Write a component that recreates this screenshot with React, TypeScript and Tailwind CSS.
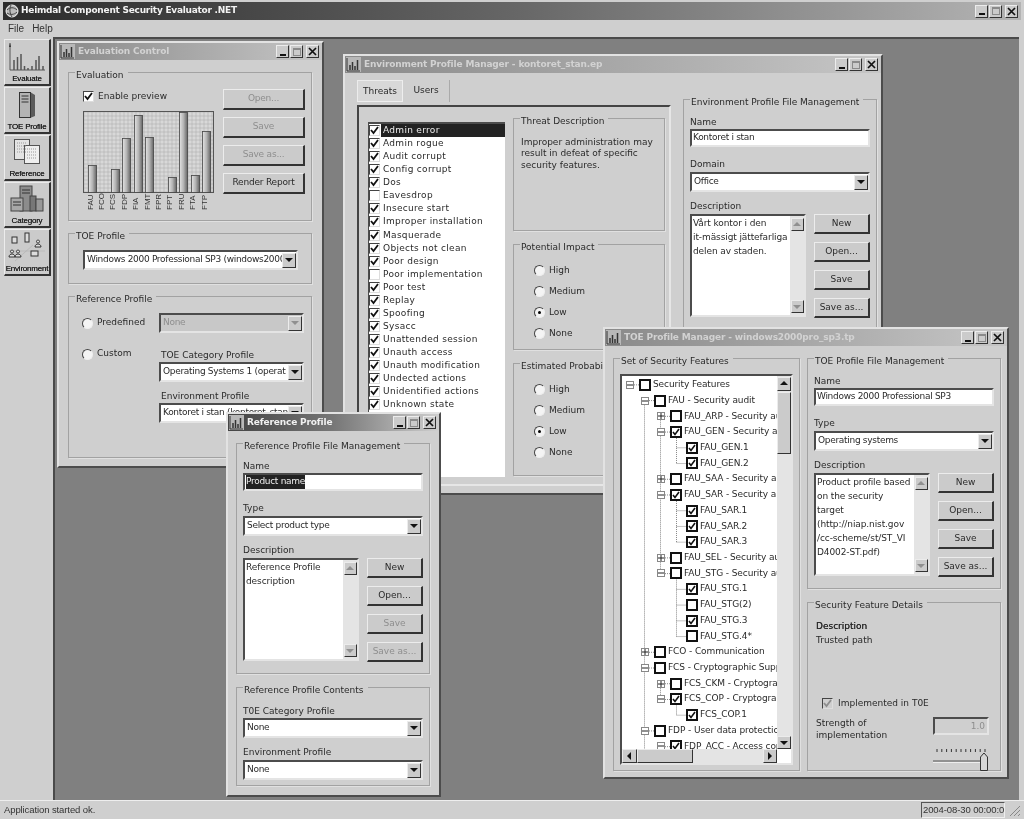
import React from 'react';

const raised = 'border border-t-[#ececec] border-l-[#ececec] border-r-[#333] border-b-[#333] bg-[#cbcbcb]';
const sunken = 'border-2 border-t-[#4c4c4c] border-l-[#4c4c4c] border-r-[#e4e4e4] border-b-[#e4e4e4]';

function ChartIcon({ className }: { className?: string }) {
  return (
    <svg width="15" height="15" viewBox="0 0 15 15" className={className}>
      <rect width="15" height="15" fill="#b8b8b8" />
      <path d="M1 1V14H14" stroke="#333" fill="none" />
      <path d="M4 13V8M6.500 13V5M9 13V9M11.500 13V3" stroke="#333" strokeWidth="1.500" />
    </svg>
  );
}

function WinButtons() {
  const cls = `${raised} w-[13px] h-[13px] flex items-center justify-center`;
  return (
    <div className="flex items-center gap-[1px]">
      <span className={cls}>
        <span className="w-[6px] h-[2px] bg-[#111] mt-[6px]" />
      </span>
      <span className={`${cls} mr-[2px]`}>
        <span className="w-[8px] h-[8px] border border-[#8a8a8a] border-t-2" />
      </span>
      <span className={cls}>
        <svg width="9" height="9" viewBox="0 0 9 9">
          <path d="M1 1L8 8M8 1L1 8" stroke="#111" strokeWidth="1.700" />
        </svg>
      </span>
    </div>
  );
}

function Win({ className, title, active, children }: { className: string; title: string; active?: boolean; children: React.ReactNode }) {
  return (
    <div className={`absolute flex flex-col bg-[#cfcfcf] border-2 border-t-[#e2e2e2] border-l-[#e2e2e2] border-r-[#4c4c4c] border-b-[#4c4c4c] ${className}`}>
      <div
        className={`h-[17px] shrink-0 flex items-center pr-[3px] ${
          active ? 'bg-gradient-to-r from-[#444] via-[#777] to-[#cfcfcf]' : 'bg-gradient-to-r from-[#8a8a8a] to-[#c6c6c6]'
        }`}
      >
        <ChartIcon className="ml-[1px] mr-[3px]" />
        <span className={`font-bold text-[9px] tracking-[-0.15px] pt-[1px] whitespace-nowrap flex-1 overflow-hidden ${active ? 'text-[#f0f0f0]' : 'text-[#d2d2d2]'}`}>{title}</span>
        <WinButtons />
      </div>
      {children}
    </div>
  );
}

function Group({ title, className, children }: { title: string; className: string; children?: React.ReactNode }) {
  return (
    <div className={`relative shrink-0 border border-[#a2a2a2] shadow-[1px_1px_0_#e0e0e0] ${className}`}>
      <span className="absolute left-[6px] top-[-4px] pl-[1px] pr-[4px] leading-[12px] whitespace-nowrap">
        <span className="absolute left-0 right-0 top-0 h-[4px] bg-[#cfcfcf]" />
        <span className="relative">{title}</span>
      </span>
      {children}
    </div>
  );
}

function Btn({ label, disabled, className }: { label: string; disabled?: boolean; className?: string }) {
  return (
    <div className={`${raised} flex items-center justify-center whitespace-nowrap border-r-2 border-b-2 ${disabled ? 'text-[#8e8e8e]' : ''} ${className ?? ''}`}>{label}</div>
  );
}

function Arrow({ dir, disabled }: { dir: 'up' | 'down' | 'left' | 'right'; disabled?: boolean }) {
  const d = { up: 'M1 6H9L5 2Z', down: 'M1 3H9L5 7Z', left: 'M6 1V9L2 5Z', right: 'M3 1V9L7 5Z' }[dir];
  return (
    <svg width="10" height="10" viewBox="0 0 10 10">
      <path d={d} fill={disabled ? '#909090' : '#111'} />
    </svg>
  );
}

function Combo({ text, disabled, className }: { text: string; disabled?: boolean; className: string }) {
  return (
    <div className={`${sunken} h-[20px] flex items-center overflow-hidden ${disabled ? 'bg-[#c8c8c8] text-[#8e8e8e]' : 'bg-white'} ${className}`}>
      <span className="flex-1 pl-[2px] whitespace-nowrap overflow-hidden tracking-[-0.3px]">{text}</span>
      <span className={`${raised} w-[14px] h-[15px] shrink-0 flex items-center justify-center`}>
        <Arrow dir="down" disabled={disabled} />
      </span>
    </div>
  );
}

function Check({ checked, disabled }: { checked?: boolean; disabled?: boolean }) {
  return (
    <span className={`w-[11px] h-[11px] shrink-0 flex items-center justify-center border border-t-[#444] border-l-[#444] border-r-[#ddd] border-b-[#ddd] ${disabled ? 'bg-[#cfcfcf]' : 'bg-white'}`}>
      {checked && (
        <svg width="9" height="9" viewBox="0 0 9 9">
          <path d="M1 4L3.500 7L8 1" stroke={disabled ? '#8e8e8e' : '#111'} strokeWidth="1.800" fill="none" />
        </svg>
      )}
    </span>
  );
}

function Radio({ checked }: { checked?: boolean }) {
  return (
    <span className="w-[11px] h-[11px] shrink-0 rounded-full bg-[#f4f4f4] border border-t-[#444] border-l-[#444] border-r-[#eee] border-b-[#eee] flex items-center justify-center">
      {checked && <span className="w-[3px] h-[3px] rounded-full bg-black" />}
    </span>
  );
}

function Scroll({ upDisabled }: { upDisabled?: boolean }) {
  return (
    <div className="w-[14px] shrink-0 bg-[#e4e4e4] flex flex-col justify-between items-center py-[2px]">
      <span className={`${raised} w-[13px] h-[13px] flex items-center justify-center`}>
        <Arrow dir="up" disabled={upDisabled} />
      </span>
      <span className={`${raised} w-[13px] h-[13px] flex items-center justify-center`}>
        <Arrow dir="down" disabled={upDisabled} />
      </span>
    </div>
  );
}

function TextBox({ lines }: { lines: string[] }) {
  return (
    <div className={`${sunken} w-[116px] h-[103px] bg-white flex`}>
      <div className="flex-1 pl-[1px] leading-[14px] whitespace-nowrap overflow-hidden tracking-[-0.1px]">
        {lines.map((l) => (
          <div key={l}>{l}</div>
        ))}
      </div>
      <Scroll upDisabled />
    </div>
  );
}

function FileMgmt({
  title,
  name,
  typeLabel,
  typeVal,
  lines,
  off,
  selected,
}: {
  title: string;
  name: string;
  typeLabel: string;
  typeVal: string;
  lines: string[];
  off?: boolean;
  selected?: boolean;
}) {
  return (
    <Group title={title} className="w-[194px] h-[231px] pl-[6px] pt-[16px]">
      <div className="leading-[12px]">Name</div>
      <div className={`${sunken} mt-[1px] w-[180px] h-[18px] bg-white flex items-center pl-[1px] whitespace-nowrap tracking-[-0.3px]`}>
        {selected ? <span className="bg-[#222] text-[#eee]">{name}</span> : name}
      </div>
      <div className="leading-[12px] mt-[11px]">{typeLabel}</div>
      <Combo text={typeVal} className="mt-[2px] w-[180px]" />
      <div className="leading-[12px] mt-[8px]">Description</div>
      <div className="flex mt-[2px]">
        <TextBox lines={lines} />
        <div className="ml-[8px] flex flex-col gap-[8px]">
          <Btn label="New" className="w-[56px] h-[20px]" />
          <Btn label="Open..." className="w-[56px] h-[20px]" />
          <Btn label="Save" disabled={off} className="w-[56px] h-[20px]" />
          <Btn label="Save as..." disabled={off} className="w-[56px] h-[20px]" />
        </div>
      </div>
    </Group>
  );
}

const chartBars = [
  [5, 54],
  [28, 58],
  [39, 27],
  [51, 4],
  [62, 26],
  [85, 66],
  [96, 1],
  [108, 64],
  [119, 20],
];
const chartNames = ['FAU', 'FCO', 'FCS', 'FDP', 'FIA', 'FMT', 'FPR', 'FPT', 'FRU', 'FTA', 'FTP'];

function Chart() {
  const grid: number[] = [];
  for (let i = 0; i < 34; i++) grid.push(i * 4);
  return (
    <svg width="131" height="101" viewBox="0 0 131 101" className="block mt-[7px]">
      <rect x="0.500" y="0.500" width="130" height="81" fill="#d8d8d8" stroke="#555" />
      {grid.map((v) => (
        <path key={v} d={`M${v + 1} 1V81M1 ${v + 1}H130`} stroke="#a8a8a8" strokeWidth="0.500" clipPath="url(#c)" />
      ))}
      <clipPath id="c">
        <rect x="1" y="1" width="129" height="80" />
      </clipPath>
      <linearGradient id="bar">
        <stop offset="0" stopColor="#e4e4e4" />
        <stop offset="0.500" stopColor="#b4b4b4" />
        <stop offset="1" stopColor="#666" />
      </linearGradient>
      {chartBars.map(([x, y]) => (
        <rect key={x} x={x + 0.500} y={y + 0.500} width="8" height={81 - y} fill="url(#bar)" stroke="#444" strokeWidth="0.800" />
      ))}
      {chartNames.map((n, i) => (
        <text key={n} transform={`translate(${9.500 + i * 11.400} 99) rotate(-90)`} fontSize="8" fontFamily="Liberation Sans" fill="#333">
          {n}
        </text>
      ))}
    </svg>
  );
}

const threats: [string, boolean][] = [
  ['Admin error', true],
  ['Admin rogue', true],
  ['Audit corrupt', true],
  ['Config corrupt', true],
  ['Dos', true],
  ['Eavesdrop', false],
  ['Insecure start', true],
  ['Improper installation', true],
  ['Masquerade', true],
  ['Objects not clean', true],
  ['Poor design', true],
  ['Poor implementation', false],
  ['Poor test', true],
  ['Replay', true],
  ['Spoofing', true],
  ['Sysacc', true],
  ['Unattended session', true],
  ['Unauth access', true],
  ['Unauth modification', true],
  ['Undected actions', true],
  ['Unidentified actions', true],
  ['Unknown state', true],
];

type TreeRow = [number, '+' | '-' | '', boolean, string];
const tree: TreeRow[] = [
  [0, '-', false, 'Security Features'],
  [1, '-', false, 'FAU - Security audit'],
  [2, '+', false, 'FAU_ARP - Security audit'],
  [2, '-', true, 'FAU_GEN - Security audit'],
  [3, '', true, 'FAU_GEN.1'],
  [3, '', true, 'FAU_GEN.2'],
  [2, '+', false, 'FAU_SAA - Security audit'],
  [2, '-', true, 'FAU_SAR - Security audit'],
  [3, '', true, 'FAU_SAR.1'],
  [3, '', true, 'FAU_SAR.2'],
  [3, '', true, 'FAU_SAR.3'],
  [2, '+', false, 'FAU_SEL - Security audit'],
  [2, '-', false, 'FAU_STG - Security audit'],
  [3, '', true, 'FAU_STG.1'],
  [3, '', false, 'FAU_STG(2)'],
  [3, '', true, 'FAU_STG.3'],
  [3, '', false, 'FAU_STG.4*'],
  [1, '+', false, 'FCO - Communication'],
  [1, '-', false, 'FCS - Cryptographic Support'],
  [2, '+', false, 'FCS_CKM - Cryptographic'],
  [2, '-', true, 'FCS_COP - Cryptographic'],
  [3, '', true, 'FCS_COP.1'],
  [1, '-', false, 'FDP - User data protection'],
  [2, '-', true, 'FDP_ACC - Access control'],
];

const indent = ['pl-[4px]', 'pl-[19px]', 'pl-[35px]', 'pl-[64px]'];
const expX = [4, 19, 35];

// the dotted guide lines of the tree
function treeLines() {
  const c = (i: number) => 8.870 + i * 15.73;
  let d = `M22.500 ${c(1)}V374`;
  const spans2 = [[2, 12], [19, 20], [23, 24]];
  const spans3 = [[3, 5], [7, 10], [12, 16], [20, 21]];
  spans2.forEach(([a, b]) => (d += `M38.500 ${c(a)}V${c(b)}`));
  spans3.forEach(([a, b]) => (d += `M54.500 ${c(a)}V${c(b)}`));
  tree.forEach(([lvl, exp], i) => {
    if (exp) d += `M${expX[lvl] + 8} ${c(i)}H${expX[lvl] + 13}`;
    if (lvl === 3) d += `M54.500 ${c(i)}H64`;
  });
  return d;
}

function Tree() {
  return (
    <div className="relative flex-1 overflow-hidden pt-[1px]">
      <svg className="absolute left-0 top-0" width="160" height="375" viewBox="0 0 160 375">
        <path d={treeLines()} stroke="#888" strokeDasharray="1 1" fill="none" />
      </svg>
      {tree.map(([lvl, exp, on, label]) => (
        <div key={label} className={`relative h-[15.730px] flex items-center whitespace-nowrap tracking-[-0.1px] ${indent[lvl]}`}>
          {exp && (
            <span className="w-[8px] h-[8px] mr-[5px] border border-[#888] bg-white flex items-center justify-center">
              <svg width="6" height="6" viewBox="0 0 6 6">
                <path d={exp === '+' ? 'M0 3H6M3 0V6' : 'M0 3H6'} stroke="#222" />
              </svg>
            </span>
          )}
          <span className="w-[12px] h-[12px] shrink-0 border-2 border-[#111] bg-white flex items-center justify-center">
            {on && (
              <svg width="8" height="8" viewBox="0 0 8 8">
                <path d="M1 4L3 6.500L7 1" stroke="#111" strokeWidth="1.600" fill="none" />
              </svg>
            )}
          </span>
          <span className="ml-[2px]">{label}</span>
        </div>
      ))}
    </div>
  );
}

function SideBtn({ label, icon, className }: { label: string; icon: React.ReactNode; className: string }) {
  return (
    <div className={`${raised} border-r-2 border-b-2 w-[47px] flex flex-col items-center justify-end ${className}`}>
      {icon}
      <span className="font-['Liberation_Sans',sans-serif] text-[8px] tracking-[-0.2px] leading-[11px] text-[#222] [text-shadow:0_0_0.6px_#222] whitespace-nowrap">{label}</span>
    </div>
  );
}

const evalIcon = (
  <svg width="38" height="30" viewBox="0 0 38 30" className="mb-[1px]">
    <path d="M2 1V28H37" stroke="#555" fill="none" />
    <path d="M2 1L1 5H3Z" fill="#333" />
    <g stroke="#c8c8c8" strokeWidth="0.500">
      <path d="M6 4V27M10 4V27M14 4V27M18 4V27M22 4V27M26 4V27M30 4V27M34 4V27M3 8H36M3 13H36M3 18H36M3 23H36" />
    </g>
    <path d="M6 28V18M9.500 28V15M13 28V12M16.500 28V24M20 28V26M24 28V24M28 28V18M31 28V14M35 28V24" stroke="#555" strokeWidth="1.500" />
  </svg>
);
const serverIcon = (
  <svg width="20" height="28" viewBox="0 0 20 28" className="mb-[2px]">
    <path d="M3 1H13L18 4V25L13 27H3Z" fill="#5b5b5b" />
    <rect x="2.500" y="1.500" width="11" height="25" fill="#b4b4b4" stroke="#333" />
    <path d="M4.500 5H11.500M4.500 8H11.500M4.500 11H11.500" stroke="#333" />
  </svg>
);
const docsIcon = (
  <svg width="28" height="28" viewBox="0 0 28 28" className="mb-[2px]">
    <rect x="1.500" y="1.500" width="15" height="20" fill="#e4e4e4" stroke="#555" />
    <rect x="11.500" y="7.500" width="15" height="18" fill="#efefef" stroke="#555" />
    <path d="M4 5H14M4 8H14M4 11H14M4 14H14M14 11H24M14 14H24M14 17H24M14 20H24" stroke="#999" strokeDasharray="1 1" />
  </svg>
);
const catIcon = (
  <svg width="34" height="28" viewBox="0 0 34 28" className="mb-[2px]">
    <rect x="10" y="1" width="12" height="25" fill="#8c8c8c" stroke="#444" />
    <rect x="1" y="13" width="12" height="13" fill="#a8a8a8" stroke="#444" />
    <rect x="20" y="11" width="6" height="15" fill="#777" stroke="#444" />
    <rect x="26" y="14" width="7" height="12" fill="#999" stroke="#444" />
    <path d="M12 5H20M12 8H20M3 17H11M3 20H11" stroke="#333" />
  </svg>
);
const envIcon = (
  <svg width="40" height="32" viewBox="0 0 40 32">
    <path d="M2 20H38M8 30L26 14" stroke="#aaa" strokeWidth="0.500" />
    <rect x="5" y="6" width="5" height="6" fill="#ddd" stroke="#333" />
    <rect x="18" y="2" width="4" height="9" fill="#ddd" stroke="#333" />
    <path d="M31 9a1.500 1.500 0 1 0 .01 0M28 16c0-4 6-4 6 0Z" fill="#ddd" stroke="#333" />
    <path d="M5 19a1.500 1.500 0 1 0 .01 0M2 26c0-4 6-4 6 0ZM11 19a1.500 1.500 0 1 0 .01 0M8 26c0-4 6-4 6 0Z" fill="#ddd" stroke="#333" />
    <rect x="24" y="20" width="7" height="5" fill="#ddd" stroke="#333" />
  </svg>
);

function LevelRadios() {
  return (
    <>
      {['High', 'Medium', 'Low', 'None'].map((v) => (
        <div key={v} className="flex items-center gap-[4px] h-[15px]">
          <Radio checked={v === 'Low'} />
          {v}
        </div>
      ))}
    </>
  );
}

export default function App() {
  return (
    <div className="relative w-[1024px] h-[819px] overflow-hidden bg-[#cfcfcf] font-['DejaVu_Sans',sans-serif] text-[9px] text-[#2a2a2a] flex flex-col blur-[0.35px]">
      <div className="h-[18px] mt-[2px] mx-[3px] shrink-0 bg-gradient-to-r from-[#2c2c2c] via-[#666] to-[#b4b4b4] flex items-center pr-[3px]">
        <svg width="14" height="14" viewBox="0 0 14 14" className="mx-[2px]">
          <circle cx="7" cy="7" r="6" fill="#bbb" stroke="#eee" />
          <path d="M2 6C5 3 9 3 12 6M2 9C5 11 9 11 12 8M6 1C4 5 5 10 7 13" stroke="#444" fill="none" />
        </svg>
        <span className="font-bold text-[9px] tracking-[-0.25px] text-[#f2f2f2] flex-1 whitespace-nowrap">Heimdal Component Security Evaluator .NET</span>
        <WinButtons />
      </div>
      <div className="h-[17px] shrink-0 flex items-center gap-[8px] pl-[8px] font-['Liberation_Sans',sans-serif] text-[10px] text-[#333]">
        <span>File</span>
        <span>Help</span>
      </div>

      <div className="flex flex-1 min-h-0">
        <div className="w-[53px] shrink-0 pl-[4px] pt-[2px] flex flex-col gap-[1px]">
          <SideBtn label="Evaluate" icon={evalIcon} className="h-[47px]" />
          <SideBtn label="TOE Profile" icon={serverIcon} className="h-[47px]" />
          <SideBtn label="Reference" icon={docsIcon} className="h-[46px]" />
          <SideBtn label="Category" icon={catIcon} className="h-[46px]" />
          <SideBtn label="Environment" icon={envIcon} className="h-[47px]" />
        </div>

        <div className="relative w-[966px] bg-[#808080] border-t-2 border-l-2 border-t-[#4a4a4a] border-l-[#4a4a4a]">
          {/* Evaluation Control */}
          <Win title="Evaluation Control" className="left-[2px] top-[2px] w-[267px] h-[427px]">
            <div className="pl-[9px] pt-[12px] flex flex-col">
              <Group title="Evaluation" className="w-[244px] h-[149px] flex pl-[14px] pt-[16px]">
                <div className="w-[131px]">
                  <div className="flex items-center gap-[4px] h-[15px]">
                    <Check checked />
                    <span>Enable preview</span>
                  </div>
                  <Chart />
                </div>
                <div className="ml-[9px] flex flex-col gap-[7px] tracking-[-0.2px]">
                  <Btn label="Open..." disabled className="w-[82px] h-[21px]" />
                  <Btn label="Save" disabled className="w-[82px] h-[21px]" />
                  <Btn label="Save as..." disabled className="w-[82px] h-[21px]" />
                  <Btn label="Render Report" className="w-[82px] h-[21px]" />
                </div>
              </Group>
              <Group title="TOE Profile" className="w-[244px] h-[51px] mt-[12px] pl-[14px] pt-[16px]">
                <Combo text="Windows 2000 Professional SP3 (windows2000" className="w-[215px]" />
              </Group>
              <Group title="Reference Profile" className="w-[244px] h-[162px] mt-[12px] pl-[13px] pt-[16px]">
                <div className="flex items-center">
                  <Radio />
                  <span className="ml-[4px] w-[62px]">Predefined</span>
                  <Combo text="None" disabled className="w-[145px]" />
                </div>
                <div className="flex mt-[15px]">
                  <div className="flex items-center h-[12px]">
                    <Radio />
                    <span className="ml-[4px] w-[62px]">Custom</span>
                  </div>
                  <div className="mt-[1px]">
                    <div className="leading-[12px] ml-[2px]">TOE Category Profile</div>
                    <Combo text="Operating Systems 1 (operat" className="w-[145px] mt-[1px]" />
                    <div className="leading-[12px] mt-[8px] ml-[2px]">Environment Profile</div>
                    <Combo text="Kontoret i stan (kontoret_stan)" className="w-[145px] mt-[1px]" />
                  </div>
                </div>
              </Group>
            </div>
          </Win>

          {/* Environment Profile Manager */}
          <Win title="Environment Profile Manager - kontoret_stan.ep" className="left-[288px] top-[15px] w-[540px] h-[441px]">
            <div className="flex flex-1">
              <div className="ml-[11px] mt-[7px] w-[315px]">
                <div className="flex h-[22px] pl-[1px]">
                  <span className={`${raised} w-[46px] pt-[1px] flex items-center justify-center bg-[#d8d8d8] border-r-[#eee] border-b-[#eee]`}>Threats</span>
                  <span className="w-[47px] flex items-center justify-center border-r border-r-[#aaa]">Users</span>
                </div>
                <div className="mt-[3px] ml-[1px] w-[314px] h-[381px] border-2 border-t-[#444] border-l-[#444] border-r-[#e6e6e6] border-b-[#e6e6e6] flex pl-[9px] pt-[15px]">
                  <div className="w-[137px] h-[355px] bg-white border-l border-t-2 border-t-[#4c4c4c] border-l-[#4c4c4c] overflow-hidden">
                    {threats.map(([t, on], i) => (
                      <div key={t} className="h-[13.070px] flex items-center whitespace-nowrap tracking-[0.3px]">
                        <Check checked={on} />
                        <span className={`ml-[1px] pl-[2px] flex-1 leading-[13px] ${i === 0 ? 'bg-[#222] text-[#eee]' : ''}`}>{t}</span>
                      </div>
                    ))}
                  </div>
                  <div className="ml-[8px] -mt-[4px] flex flex-col">
                    <Group title="Threat Description" className="w-[152px] h-[113px] pl-[7px] pt-[18px] leading-[11.300px]">
                      Improper administration may
                      <br />
                      result in defeat of specific
                      <br />
                      security features.
                    </Group>
                    <Group title="Potential Impact" className="w-[152px] h-[106px] mt-[13px] pl-[20px] pt-[18px] flex flex-col gap-[6px]">
                      <LevelRadios />
                    </Group>
                    <Group title="Estimated Probability" className="w-[152px] h-[113px] mt-[13px] pl-[20px] pt-[18px] flex flex-col gap-[6px]">
                      <LevelRadios />
                    </Group>
                  </div>
                </div>
              </div>
              <div className="ml-[12px] mt-[26px]">
                <FileMgmt
                  title="Environment Profile File Management"
                  name="Kontoret i stan"
                  typeLabel="Domain"
                  typeVal="Office"
                  lines={['Vårt kontor i den', 'it-mässigt jättefarliga', 'delen av staden.']}
                />
              </div>
            </div>
          </Win>

          {/* TOE Profile Manager */}
          <Win title="TOE Profile Manager - windows2000pro_sp3.tp" className="left-[548px] top-[288px] w-[406px] h-[452px]">
            <div className="flex pl-[8px] pt-[12px]">
              <Group title="Set of Security Features" className="w-[187px] h-[413px] pl-[6px] pt-[15px]">
                <div className={`${sunken} w-[173px] h-[391px] bg-white flex flex-col overflow-hidden`}>
                  <div className="flex h-[373px]">
                    <Tree />
                    <div className="w-[14px] shrink-0 bg-[#e4e4e4] flex flex-col">
                      <span className={`${raised} h-[14px] mt-[1px] flex items-center justify-center`}>
                        <Arrow dir="up" />
                      </span>
                      <span className={`${raised} h-[62px] mt-[1px]`} />
                      <span className={`${raised} h-[13px] mt-auto flex items-center justify-center`}>
                        <Arrow dir="down" />
                      </span>
                    </div>
                  </div>
                  <div className="h-[14px] flex bg-[#e4e4e4] mr-[14px]">
                    <span className={`${raised} w-[15px] flex items-center justify-center`}>
                      <Arrow dir="left" />
                    </span>
                    <span className={`${raised} w-[56px]`} />
                    <span className={`${raised} w-[14px] ml-auto flex items-center justify-center`}>
                      <Arrow dir="right" />
                    </span>
                  </div>
                </div>
              </Group>
              <div className="ml-[7px] flex flex-col">
                <FileMgmt
                  title="TOE Profile File Management"
                  name="Windows 2000 Professional SP3"
                  typeLabel="Type"
                  typeVal="Operating systems"
                  lines={['Product profile based', 'on the security', 'target', '(http://niap.nist.gov', '/cc-scheme/st/ST_VI', 'D4002-ST.pdf)']}
                />
                <Group title="Security Feature Details" className="w-[194px] h-[169px] mt-[13px] pl-[8px] pt-[16px] leading-[14px]">
                  <div className="[text-shadow:0_0_0.6px_#222]">Description</div>
                  <div>Trusted path</div>
                  <div className="flex items-center gap-[5px] ml-[6px] mt-[49px] h-[14px]">
                    <Check checked disabled />
                    Implemented in T0E
                  </div>
                  <div className="flex mt-[7px]">
                    <div className="leading-[11.500px] pt-[1px] w-[117px]">
                      Strength of
                      <br />
                      implementation
                    </div>
                    <div className={`${sunken} w-[56px] h-[18px] bg-[#cfcfcf] text-[#8e8e8e] flex items-center justify-end pr-[2px]`}>1.0</div>
                  </div>
                  <svg width="56" height="24" viewBox="0 0 56 24" className="ml-[117px] mt-[8px]">
                    <path d="M4 0V3M8.800 0V3M13.600 0V3M18.400 0V3M23.200 0V3M28 0V3M32.800 0V3M37.600 0V3M42.400 0V3M47.200 0V3M52 0V3" stroke="#333" />
                    <path d="M0 12H47" stroke="#555" />
                    <path d="M0 13.500H47" stroke="#eee" />
                    <path d="M47.500 21.500V8L51 4L54.500 8V21.500Z" fill="#d6d6d6" stroke="#333" />
                  </svg>
                </Group>
              </div>
            </div>
          </Win>

          {/* Reference Profile */}
          <Win active title="Reference Profile" className="left-[171px] top-[373px] w-[215px] h-[385px]">
            <div className="pl-[8px] pt-[12px] flex flex-col">
              <FileMgmt
                title="Reference Profile File Management"
                name="Product name"
                typeLabel="Type"
                typeVal="Select product type"
                lines={['Reference Profile', 'description']}
                off
                selected
              />
              <Group title="Reference Profile Contents" className="w-[194px] h-[99px] mt-[13px] pl-[6px] pt-[17px]">
                <div className="leading-[12px]">T0E Category Profile</div>
                <Combo text="None" className="w-[180px] mt-[1px]" />
                <div className="leading-[12px] mt-[8px]">Environment Profile</div>
                <Combo text="None" className="w-[180px] mt-[2px]" />
              </Group>
            </div>
          </Win>
        </div>
      </div>

      <div className="h-[19px] shrink-0 flex items-center font-['Liberation_Sans',sans-serif] text-[9.500px] tracking-[-0.1px] text-[#333] border-t border-t-[#eee]">
        <div className="w-[918px] pl-[3px] ml-[1px]">Application started ok.</div>
        <div className="w-[84px] ml-[2px] h-[16px] border border-t-[#555] border-l-[#555] border-r-[#eee] border-b-[#eee] flex items-center pl-[1px] overflow-hidden whitespace-nowrap">
          2004-08-30 00:00:00
        </div>
        <svg width="14" height="14" viewBox="0 0 14 14" className="ml-[2px]">
          <path d="M3 13L13 3M7 13L13 7M11 13L13 11" stroke="#888" />
        </svg>
      </div>
    </div>
  );
}
